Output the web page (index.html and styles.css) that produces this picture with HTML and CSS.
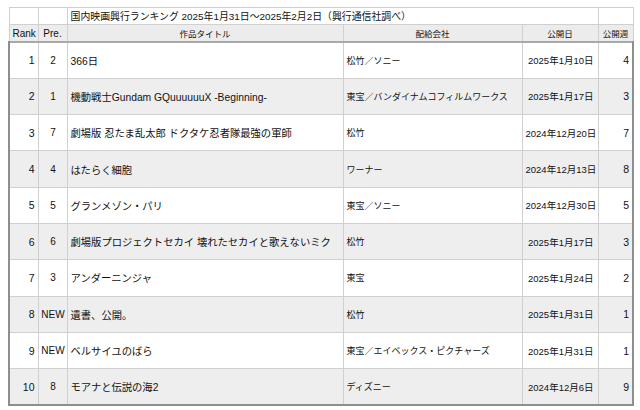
FILE: index.html
```html
<!DOCTYPE html>
<html lang="ja">
<head>
<meta charset="utf-8">
<title>国内映画興行ランキング</title>
<link rel="stylesheet" href="styles.css">
</head>
<body>
<div class="wrap">
<table class="rank">
  <colgroup>
    <col class="c-rank"><col class="c-pre"><col class="c-title"><col class="c-comp"><col class="c-date"><col class="c-week">
  </colgroup>
  <thead>
    <tr class="caption-row">
      <td></td><td></td>
      <td colspan="3" class="caption">国内映画興行ランキング 2025年1月31日～2025年2月2日（興行通信社調べ）</td>
      <td></td>
    </tr>
    <tr class="head-row">
      <th class="h-rank">Rank</th>
      <th class="h-pre">Pre.</th>
      <th class="h-small">作品タイトル</th>
      <th class="h-small">配給会社</th>
      <th class="h-small">公開日</th>
      <th class="h-small">公開週</th>
    </tr>
  </thead>
  <tbody>
    <tr><td class="num">1</td><td class="pre">2</td><td class="title">366日</td><td class="comp">松竹／ソニー</td><td class="date">2025年1月10日</td><td class="week">4</td></tr>
    <tr><td class="num">2</td><td class="pre">1</td><td class="title">機動戦士Gundam GQuuuuuuX -Beginning-</td><td class="comp">東宝／バンダイナムコフィルムワークス</td><td class="date">2025年1月17日</td><td class="week">3</td></tr>
    <tr><td class="num">3</td><td class="pre">7</td><td class="title">劇場版 忍たま乱太郎 ドクタケ忍者隊最強の軍師</td><td class="comp">松竹</td><td class="date">2024年12月20日</td><td class="week">7</td></tr>
    <tr><td class="num">4</td><td class="pre">4</td><td class="title">はたらく細胞</td><td class="comp">ワーナー</td><td class="date">2024年12月13日</td><td class="week">8</td></tr>
    <tr><td class="num">5</td><td class="pre">5</td><td class="title">グランメゾン・パリ</td><td class="comp">東宝／ソニー</td><td class="date">2024年12月30日</td><td class="week">5</td></tr>
    <tr><td class="num">6</td><td class="pre">6</td><td class="title">劇場版プロジェクトセカイ 壊れたセカイと歌えないミク</td><td class="comp">松竹</td><td class="date">2025年1月17日</td><td class="week">3</td></tr>
    <tr><td class="num">7</td><td class="pre">3</td><td class="title">アンダーニンジャ</td><td class="comp">東宝</td><td class="date">2025年1月24日</td><td class="week">2</td></tr>
    <tr><td class="num">8</td><td class="pre">NEW</td><td class="title">遺書、公開。</td><td class="comp">松竹</td><td class="date">2025年1月31日</td><td class="week">1</td></tr>
    <tr><td class="num">9</td><td class="pre">NEW</td><td class="title">ベルサイユのばら</td><td class="comp">東宝／エイベックス・ピクチャーズ</td><td class="date">2025年1月31日</td><td class="week">1</td></tr>
    <tr><td class="num">10</td><td class="pre">8</td><td class="title">モアナと伝説の海2</td><td class="comp">ディズニー</td><td class="date">2024年12月6日</td><td class="week">9</td></tr>
  </tbody>
</table>
</div>
</body>
</html>
```
FILE: styles.css
```css
html, body {
  margin: 0;
  padding: 0;
  background: #ffffff;
}
.wrap {
  padding: 7px 8px 0 8px;
}
.rank {
  width: 624px;
  border-collapse: collapse;
  table-layout: fixed;
  font-family: "Liberation Sans", "Noto Sans CJK JP", sans-serif;
  color: #111;
  border: 1px solid #d0d0d0;
}
.c-rank { width: 29px; }
.c-pre { width: 29px; }
.c-title { width: 276px; }
.c-comp { width: 179px; }
.c-date { width: 76px; }
.c-week { width: 35px; }

.rank td, .rank th {
  border: 1px solid #d0d0d0;
  padding: 0 3px;
  white-space: nowrap;
  overflow: hidden;
}
.caption-row td {
  height: 16px;
  font-size: 9.9px;
  background: #fff;
}
.caption {
  text-align: left;
  padding-left: 3px;
}
.head-row th {
  height: 16px;
  background: #ececec;
  font-weight: normal;
  text-align: center;
}
.h-rank, .h-pre {
  font-size: 10px;
}
.h-small {
  font-size: 8.5px;
}
.rank tbody {
  border: 2px solid #8e8e8e;
  border-top: 2px solid #a8a8a8;
}
.rank tbody tr {
  height: 36.3px;
}
.rank tbody tr:nth-child(even) td {
  background: #eeeeee;
}
.num {
  text-align: right;
  font-size: 10.5px;
}
.rank td.pre {
  text-align: center;
  font-size: 10px;
  padding: 0 0 0 1px;
}
.title {
  font-size: 10.3px;
  text-align: left;
}
.comp {
  font-size: 9px;
  text-align: left;
}
.rank td.date {
  font-size: 9.5px;
  text-align: right;
  padding-right: 4px;
}
.week {
  font-size: 10.5px;
  text-align: right;
}
```
